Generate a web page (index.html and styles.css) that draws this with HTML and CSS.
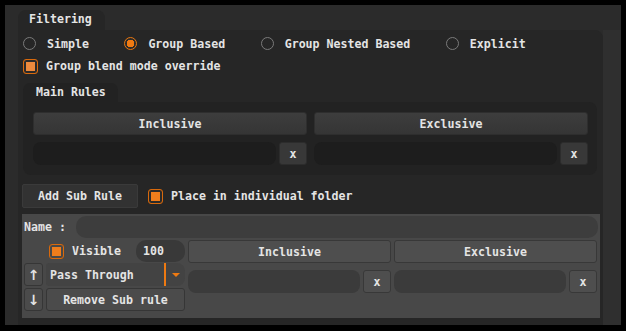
FILE: index.html
```html
<!DOCTYPE html>
<html lang="en">
<head>
  <meta charset="UTF-8" />
  <title>Filtering</title>
  <link rel="stylesheet" href="styles.css">
</head>
<body>

  <div class="window">
    <div class="content">
      <div class="tab">Filtering</div>
      <div class="panel">

        <div class="radios">
          <label class="radio"><span class="ring"></span>Simple</label>
          <label class="radio on"><span class="ring"></span>Group Based</label>
          <label class="radio"><span class="ring"></span>Group Nested Based</label>
          <label class="radio"><span class="ring"></span>Explicit</label>
        </div>

        <label class="check blend"><span class="box"></span>Group blend mode override</label>

        <div class="subtab">Main Rules</div>
        <div class="rules">
          <div class="rule-col">
            <button class="head">Inclusive</button>
            <div class="field-row"><span class="field"></span><button class="x">x</button></div>
          </div>
          <div class="rule-col">
            <button class="head">Exclusive</button>
            <div class="field-row"><span class="field"></span><button class="x">x</button></div>
          </div>
        </div>

        <div class="add-row">
          <button class="add-btn">Add Sub Rule</button>
          <label class="check"><span class="box"></span>Place in individual folder</label>
        </div>

        <div class="sub">
          <div class="name-row">
            <span class="name-label">Name :</span>
            <span class="name-field"></span>
          </div>
          <div class="sub-grid">
            <div class="sub-left">
              <div class="visible-row">
                <label class="check"><span class="box"></span>Visible</label>
                <span class="num">100</span>
              </div>
              <div class="ctrl-row">
                <button class="arrow">↑</button>
                <div class="dropdown">
                  <span class="dd-text">Pass Through</span>
                  <span class="dd-bar"></span>
                  <span class="dd-caret"></span>
                </div>
              </div>
              <div class="ctrl-row">
                <button class="arrow">↓</button>
                <button class="remove-btn">Remove Sub rule</button>
              </div>
            </div>
            <div class="rule-col light">
              <button class="head">Inclusive</button>
              <div class="field-row"><span class="field"></span><button class="x">x</button></div>
            </div>
            <div class="rule-col light">
              <button class="head">Exclusive</button>
              <div class="field-row"><span class="field"></span><button class="x">x</button></div>
            </div>
          </div>
        </div>

      </div>
    </div>
    <div class="scroll"></div>
  </div>

</body>
</html>
```

FILE: styles.css
```css
* {
  box-sizing: border-box;
  font-family: 'DejaVu Sans Mono', monospace;
}

body {
  margin: 0;
  background-color: #000;
  width: 626px;
  height: 331px;
  overflow: hidden;
}

button {
  font: inherit;
  color: inherit;
  padding: 0;
  cursor: pointer;
}

.window {
  margin: 5px;
  width: 616px;
  height: 320px;
  background-color: #2b2b2b;
  display: flex;
  color: #e4e4e4;
  font-size: 11.6px;
  font-weight: bold;
}

.content {
  flex: 1;
  padding-left: 13px;
  display: flex;
  flex-direction: column;
}

.scroll {
  width: 18px;
  margin-top: 25px;
  background-color: #2f2f2f;
}

/* Onglet principal */
.tab {
  width: 87px;
  height: 20px;
  margin-top: 5px;
  padding-left: 11px;
  line-height: 19px;
  background-color: #262626;
  border-radius: 8px 8px 0 0;
}

.panel {
  flex: 1;
  background-color: #262626;
  border-radius: 0 8px 0 0;
  padding: 0 6px 0 5px;
  display: flex;
  flex-direction: column;
}

.radios {
  display: flex;
  gap: 35.5px;
  margin-top: 6px;
  height: 15px;
  align-items: center;
}

.radio {
  display: flex;
  align-items: center;
  gap: 11px;
}

.ring {
  width: 13px;
  height: 13px;
  border-radius: 50%;
  border: 1px solid #7a7a7a;
}

.radio.on .ring {
  border-color: #e8760f;
  background: radial-gradient(circle, #f07a12 0 3.6px, #2a2a2a 4px);
}

.check {
  display: flex;
  align-items: center;
  gap: 8px;
}

.box {
  width: 15px;
  height: 15px;
  border: 1px solid #d8690c;
  border-radius: 3px;
  background-color: #262626;
  box-shadow: inset 0 0 0 2px #2a2a2a, inset 0 0 0 8px #ee7d1c;
}

.blend {
  margin-top: 7px;
  height: 16px;
}

.blend .box {
  box-shadow: inset 0 0 0 2px #2a2a2a, inset 0 0 0 8px #ec8a3e;
}

/* Règles principales */
.subtab {
  width: 95px;
  height: 19px;
  margin-top: 9px;
  padding-left: 13px;
  line-height: 19px;
  background-color: #222;
  border-radius: 7px 7px 0 0;
}

.rules {
  background-color: #222;
  border-radius: 0 8px 8px 8px;
  padding: 10px 9px 10px 10px;
  display: flex;
  gap: 7px;
}

.rule-col {
  flex: 1;
  display: flex;
  flex-direction: column;
  gap: 7px;
}

.head {
  height: 23px;
  border: 1px solid #2e2e2e;
  border-radius: 3px;
  background: linear-gradient(#3d3d3d, #353535);
}

.field-row {
  display: flex;
  gap: 3px;
  height: 23px;
}

.field {
  flex: 1;
  background-color: #1d1d1d;
  border-radius: 8px;
}

.x {
  width: 28px;
  border: 1px solid #2c2c2c;
  border-radius: 3px;
  background-color: #383838;
}

/* Sous-règle */
.add-row {
  display: flex;
  align-items: center;
  gap: 10px;
  margin-top: 9px;
  margin-left: -1px;
  height: 24px;
}

.add-btn {
  width: 116px;
  height: 24px;
  border: 1px solid #3a3a3a;
  border-radius: 2px;
  background-color: #323232;
}

.sub {
  margin: 6px -3px 0 -1px;
  height: 104px;
  background-color: #484848;
  padding: 2px 3px 0 2px;
}

.name-row {
  display: flex;
  align-items: center;
  height: 22px;
}

.name-label {
  width: 52px;
}

.name-field {
  flex: 1;
  height: 22px;
  margin-right: -1px;
  background-color: #3d3d3d;
  border-radius: 10px;
}

.sub-grid {
  display: grid;
  grid-template-columns: 161px 1fr 1fr;
  column-gap: 3px;
  margin-top: 2px;
}

.sub-left {
  display: flex;
  flex-direction: column;
}

.visible-row {
  display: flex;
  align-items: center;
  height: 22px;
  padding-left: 25px;
}

.visible-row .box {
  box-shadow: inset 0 0 0 2px #484848, inset 0 0 0 8px #ee7d1c;
}

.num {
  margin-left: auto;
  width: 49px;
  height: 22px;
  line-height: 22px;
  padding-left: 7px;
  background-color: #393939;
  border-radius: 10px;
}

.ctrl-row {
  display: flex;
  gap: 3px;
  height: 23px;
  margin-top: 1px;
}

.ctrl-row + .ctrl-row {
  margin-top: 2px;
}

.arrow {
  width: 19px;
  font-family: 'DejaVu Sans', sans-serif;
  font-size: 14px;
  line-height: 1;
  border: 1px solid #363636;
  border-radius: 3px;
  background-color: #4b4b4b;
}

.dropdown {
  flex: 1;
  display: flex;
  align-items: center;
  padding-left: 4px;
  background-color: #434343;
  border-radius: 3px 8px 8px 3px;
}

.dd-text {
  flex: 1;
}

.dd-bar {
  width: 2px;
  align-self: stretch;
  background-color: #ee7a12;
}

.dd-caret {
  width: 0;
  height: 0;
  margin: 0 5px 0 6px;
  border-left: 4px solid transparent;
  border-right: 4px solid transparent;
  border-top: 4px solid #ee7a12;
}

.remove-btn {
  flex: 1;
  border: 1px solid #363636;
  border-radius: 3px;
  background-color: #4b4b4b;
}

.rule-col.light .head {
  background: #4e4e4e;
  border-color: #383838;
}

.rule-col.light .field {
  background-color: #3b3b3b;
}

.rule-col.light .x {
  background-color: #4e4e4e;
  border-color: #383838;
}
```
